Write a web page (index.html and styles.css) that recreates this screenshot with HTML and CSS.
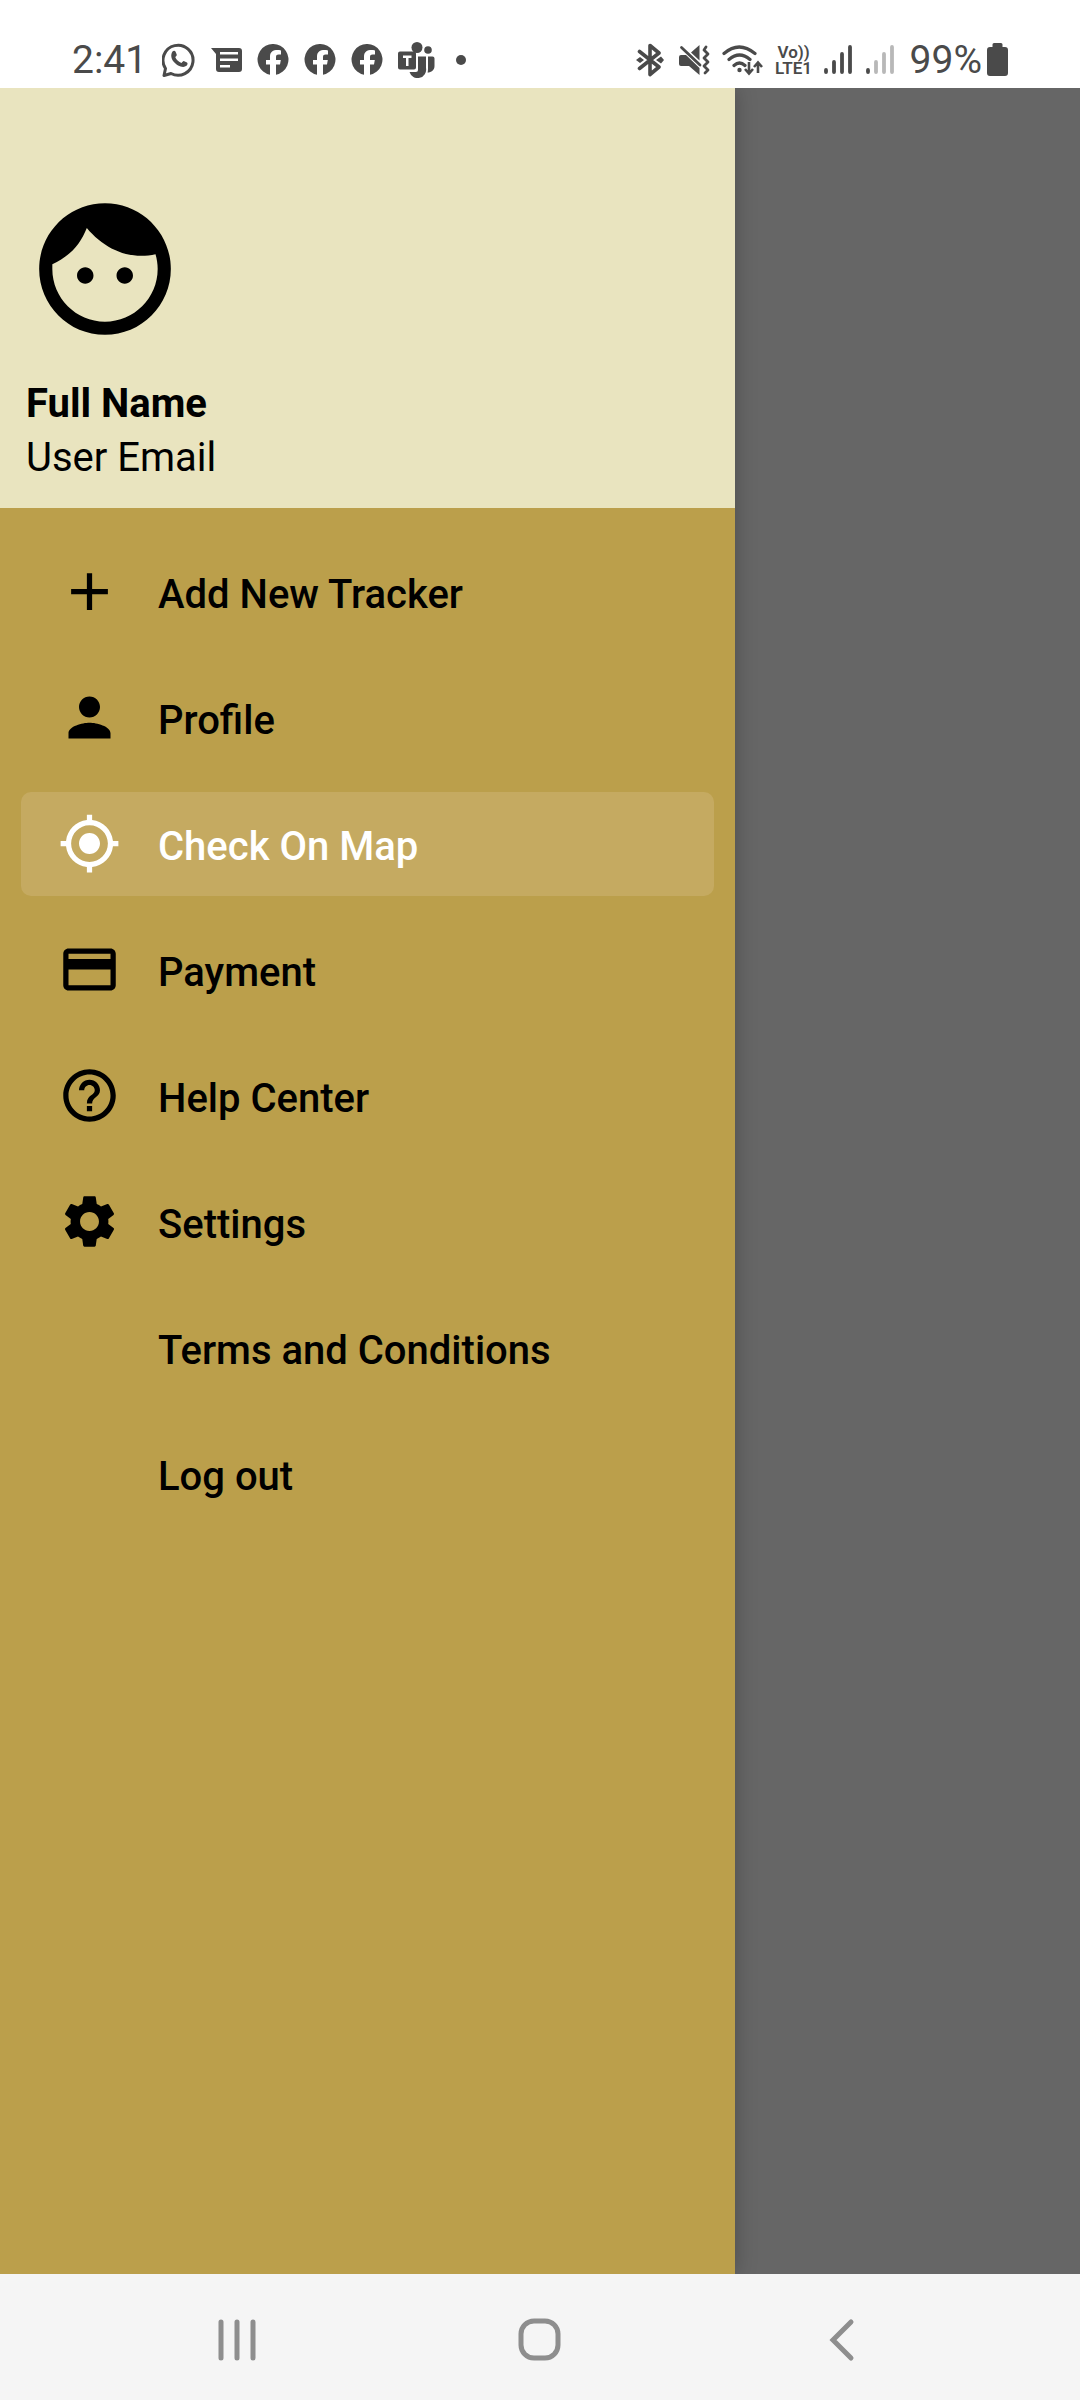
FILE: index.html
```
<!DOCTYPE html>
<html lang="en">
<head>
<meta charset="utf-8">
<meta name="viewport" content="width=device-width, initial-scale=1">
<title>Tracker menu</title>
<link rel="stylesheet" href="styles.css">
</head>
<body>
<svg class="symbols" aria-hidden="true">
  <symbol id="facebook" viewBox="0 0 32 32"><path d="M13 30.700A15.500 15.500 0 1 1 19 30.700V20.500h4l.8-4.500H19v-3c0-1.700.8-2.500 2.700-2.500H24V6.400c-6-1.200-11 .4-11 6.100V16H9v4.500h4z"/></symbol>
</svg>

<header class="status">
  <div class="status-left">
    <time class="status-text">2:41</time>
    <svg width="34" height="36" viewBox="0 0 34 36"><path d="M3.500 26.500A15 15 0 1 1 9 31.500L2 33.500z" fill="none" stroke="currentColor" stroke-width="3" stroke-linejoin="round"/><path d="M10.500 9.500c1-1 2.700-.8 3.200.4l1 2.600c.4 1-.9 1.900-1.400 2.700 1.300 2.900 3.500 4.700 6.200 5.800.9-.7 1.600-2.300 2.700-1.800l2.800 1.400c1 .6.500 2.300-.5 3.200-5.600 4.500-19.400-6-14-14.300z"/></svg>
    <svg width="31" height="26" viewBox="0 0 31 26"><path fill-rule="evenodd" d="M0 1h28a3 3 0 0 1 3 3v18a3 3 0 0 1-3 3H8a3 3 0 0 1-3-3V7zM9 5v2.500h18V5zm0 6.500V14h18v-2.500zM9 18v2.500h10V18z"/></svg>
    <svg width="32" height="32"><use href="#facebook"/></svg>
    <svg width="32" height="32"><use href="#facebook"/></svg>
    <svg width="32" height="32"><use href="#facebook"/></svg>
    <svg width="37" height="36" viewBox="0 0 37 36"><circle cx="19" cy="5.500" r="5.500"/><circle cx="30" cy="8" r="3.800"/><path d="M20 14.500h8V26a8.500 8.500 0 0 1-16.500 4H18a2 2 0 0 0 2-2zM30 14.500h4.500a2 2 0 0 1 2 2V24c0 4-3 6.500-7 6.500.4-1 .5-2.500.5-4z"/><path fill-rule="evenodd" d="M2 9.500h14a2 2 0 0 1 2 2v14a2 2 0 0 1-2 2H2a2 2 0 0 1-2-2v-14a2 2 0 0 1 2-2zM5 13.500V16h3v8h2.500v-8h3v-2.500z"/></svg>
    <svg width="24" height="12" viewBox="0 0 24 12"><circle cx="11" cy="6" r="5"/></svg>
  </div>
  <div class="status-right">
    <svg width="31" height="34" viewBox="0 0 31 34"><path d="M3.500 8.500 23 24l-9 7.500v-29L23 10 3.500 25.500" fill="none" stroke="currentColor" stroke-width="3.600" stroke-linejoin="round" stroke-linecap="round"/><path d="M0 17l4-3 4 3-4 3zM20 17l5-3.500 3 3.500-3 3.500z"/></svg>
    <svg width="31" height="32" viewBox="0 0 31 32"><path d="M20.500 1v15.500L12 8.500zM2 11h5l13.500 13V31L10 22H2a2 2 0 0 1-2-2v-7a2 2 0 0 1 2-2z"/><path d="M2.500 3.500 21 21M27 3l-2 3 4 4-4 4 4 4-4 4 4 4-3 3" fill="none" stroke="currentColor" stroke-width="2.800" stroke-linecap="round" stroke-linejoin="round"/></svg>
    <svg width="42" height="32" viewBox="0 0 42 32"><path d="M2 9.500Q17-3.500 33 9.500M7 15.500q10.500-9 21 0M12 21.500q5.500-5 11 0" fill="none" stroke="currentColor" stroke-width="3.200" stroke-linecap="round"/><circle cx="17.500" cy="26" r="2.200"/><path d="M27 18v11m-4-4 4 4.500 4-4.500M36 29V18m-4 5 4-4.500 4 4.500" fill="none" stroke="currentColor" stroke-width="2.600"/></svg>
    <span class="volte"><span>Vo))</span><span>LTE1</span></span>
    <svg width="30" height="30" viewBox="0 0 30 30"><g fill="none" stroke="currentColor" stroke-width="3.800" stroke-linecap="round"><path d="M2 25v2M10 17v10M18 9v18M26 2v25"/></g></svg>
    <svg width="32" height="30" viewBox="0 0 32 30"><g fill="none" stroke="currentColor" stroke-width="3.800" stroke-linecap="round"><path d="M2 25v2"/><path class="faded" d="M10 17v10M18 9v18M26 2v25"/></g></svg>
    <span class="battery"><span class="status-text">99%</span><svg width="26" height="34" viewBox="0 0 26 34"><path d="M12 0h7a1.500 1.500 0 0 1 1.500 1.500V4H23a3 3 0 0 1 3 3v23a3 3 0 0 1-3 3H8a3 3 0 0 1-3-3V7a3 3 0 0 1 3-3h2.500V1.500A1.500 1.500 0 0 1 12 0z"/></svg></span>
  </div>
</header>

<main class="screen">
  <aside class="drawer">
    <section class="account">
      <svg class="avatar" viewBox="0 0 24 24"><path d="M10.250 13c0 .69-.56 1.250-1.250 1.250S7.750 13.690 7.750 13s.56-1.250 1.250-1.250 1.250.56 1.250 1.250zM15 11.750c-.69 0-1.250.56-1.250 1.250s.56 1.250 1.250 1.250 1.250-.56 1.250-1.250-.56-1.250-1.250-1.250zM22 12c0 5.520-4.480 10-10 10S2 17.520 2 12 6.480 2 12 2s10 4.480 10 10zm-2 0c0-.78-.12-1.530-.33-2.240-.7.15-1.420.24-2.170.24-3.130 0-6.120-1.640-8.260-4.240C8.190 8.370 6.600 10.080 4 11.260c0 .24 0 .49 0 .74 0 4.410 3.590 8 8 8s8-3.590 8-8z"/></svg>
      <h1 class="name">Full Name</h1>
      <p class="email">User Email</p>
    </section>
    <nav class="menu">
      <a class="item" href="#add"><svg class="icon" viewBox="0 0 24 24"><path d="M19 13h-6v6h-2v-6H5v-2h6V5h2v6h6v2z"/></svg><span class="label">Add New Tracker</span></a>
      <a class="item" href="#profile"><svg class="icon" viewBox="0 0 24 24"><path d="M12 12c2.210 0 4-1.790 4-4s-1.790-4-4-4-4 1.790-4 4 1.790 4 4 4zm0 2c-2.670 0-8 1.340-8 4v2h16v-2c0-2.660-5.330-4-8-4z"/></svg><span class="label">Profile</span></a>
      <a class="item selected" href="#map" aria-current="page"><svg class="icon" viewBox="0 0 24 24"><path d="M12 8c-2.210 0-4 1.790-4 4s1.790 4 4 4 4-1.790 4-4-1.790-4-4-4zm8.940 3c-.46-4.170-3.770-7.480-7.940-7.940V1h-2v2.060C6.830 3.520 3.520 6.830 3.060 11H1v2h2.060c.46 4.170 3.770 7.480 7.940 7.940V23h2v-2.060c4.170-.46 7.480-3.770 7.940-7.940H23v-2h-2.060zM12 19c-3.870 0-7-3.130-7-7s3.130-7 7-7 7 3.130 7 7-3.130 7-7 7z"/></svg><span class="label">Check On Map</span></a>
      <a class="item" href="#payment"><svg class="icon" viewBox="0 0 24 24"><path d="M20 4H4c-1.110 0-1.990.89-1.990 2L2 18c0 1.110.89 2 2 2h16c1.110 0 2-.89 2-2V6c0-1.110-.89-2-2-2zm0 14H4v-6h16v6zm0-10H4V6h16v2z"/></svg><span class="label">Payment</span></a>
      <a class="item" href="#help"><svg class="icon" viewBox="0 0 24 24"><path d="M11 18h2v-2h-2v2zm1-16C6.480 2 2 6.480 2 12s4.480 10 10 10 10-4.480 10-10S17.520 2 12 2zm0 18c-4.410 0-8-3.590-8-8s3.590-8 8-8 8 3.590 8 8-3.590 8-8 8zm0-14c-2.210 0-4 1.790-4 4h2c0-1.100.9-2 2-2s2 .9 2 2c0 2-3 1.750-3 5h2c0-2.250 3-2.500 3-5 0-2.210-1.790-4-4-4z"/></svg><span class="label">Help Center</span></a>
      <a class="item" href="#settings"><svg class="icon" viewBox="0 0 24 24"><path d="M19.140 12.940c.04-.3.06-.61.06-.94 0-.32-.02-.64-.07-.94l2.030-1.580c.18-.14.23-.41.12-.61l-1.920-3.320c-.12-.22-.37-.29-.59-.22l-2.390.96c-.5-.38-1.030-.7-1.620-.94l-.36-2.540c-.04-.24-.24-.41-.48-.41h-3.840c-.24 0-.43.17-.47.41l-.36 2.540c-.59.24-1.130.57-1.620.94l-2.390-.96c-.22-.08-.47 0-.59.22L2.740 8.870c-.12.21-.08.47.12.61l2.030 1.580c-.05.3-.09.63-.09.94s.02.64.07.94l-2.030 1.580c-.18.14-.23.41-.12.61l1.920 3.320c.12.22.37.29.59.22l2.390-.96c.5.38 1.030.7 1.620.94l.36 2.540c.05.24.24.41.48.41h3.840c.24 0 .44-.17.47-.41l.36-2.540c.59-.24 1.130-.56 1.620-.94l2.390.96c.22.08.47 0 .59-.22l1.920-3.320c.12-.22.07-.47-.12-.61l-2.010-1.580zM12 15.600c-1.980 0-3.600-1.620-3.600-3.600s1.620-3.600 3.600-3.600 3.600 1.620 3.600 3.600-1.620 3.600-3.600 3.600z"/></svg><span class="label">Settings</span></a>
      <a class="item" href="#terms"><span class="icon"></span><span class="label">Terms and Conditions</span></a>
      <a class="item" href="#logout"><span class="icon"></span><span class="label">Log out</span></a>
    </nav>
  </aside>
</main>

<footer class="system-nav">
  <button type="button" aria-label="Recent apps"><svg width="44" height="44" viewBox="0 0 44 44"><path d="M5 4v36M21 4v36M37 4v36"/></svg></button>
  <button type="button" aria-label="Home"><svg width="44" height="44" viewBox="0 0 44 44"><rect x="3" y="3" width="37" height="37" rx="13"/></svg></button>
  <button type="button" aria-label="Back"><svg width="44" height="44" viewBox="0 0 44 44"><path d="M31 4 13 22l18 18"/></svg></button>
</footer>
</body>
</html>
```
FILE: styles.css
```
* {
  box-sizing: border-box;
}

body {
  margin: 0;
  min-height: 100vh;
  display: flex;
  flex-direction: column;
  background: #fff;
  color: #000;
  font-family: Roboto, "Liberation Sans", sans-serif;
}

svg {
  flex: none;
  fill: currentColor;
}

.symbols {
  display: none;
}

/* Status bar */
.status {
  display: flex;
  justify-content: space-between;
  align-items: center;
  height: 88px;
  padding: 32px 72px 0;
  color: #4a4a4a;
}

.status-left,
.status-right,
.battery {
  display: flex;
  align-items: center;
}

.status-left {
  gap: 15px;
}

.status-right {
  gap: 12px;
}

.status-text {
  font-size: 39px;
  line-height: 40px;
}

.volte {
  display: flex;
  flex-direction: column;
  align-items: center;
  width: 36px;
  font-size: 17px;
  font-weight: 600;
  line-height: 16px;
}

.faded {
  stroke: #b8b8b8;
}

/* Drawer over the dimmed screen */
.screen {
  flex: 1;
  display: flex;
  background: #666;
}

.drawer {
  width: min(735px, 80%);
  background: #bb9f4b;
  box-shadow: 0 0 20px rgba(0, 0, 0, 0.25);
  clip-path: inset(0 -30px 0 0);
}

.account {
  padding: 102px 26px 23px;
  background: #e9e4bf;
}

.avatar {
  display: block;
  width: 158px;
  height: 158px;
}

.name,
.email {
  margin: 0;
  font-size: 40px;
  line-height: 54px;
}

.name {
  margin-top: 29px;
  font-weight: 700;
}

.email {
  font-weight: 400;
}

.menu {
  display: flex;
  flex-direction: column;
  gap: 22px;
  padding: 32px 21px;
}

.item {
  display: flex;
  align-items: center;
  gap: 37px;
  height: 104px;
  padding: 0 37px 2px;
  border-radius: 10px;
  color: #000;
  text-decoration: none;
}

.selected {
  background: #c5aa61;
  color: #fff;
}

.icon {
  flex: none;
  width: 63px;
  height: 63px;
}

.label {
  padding-top: 8px;
  font-size: 40px;
  font-weight: 500;
  line-height: 48px;
}

/* System navigation */
.system-nav {
  display: flex;
  height: 126px;
  padding: 6px 87px 0;
  background: #f5f5f5;
}

.system-nav button {
  flex: 1;
  display: flex;
  align-items: center;
  justify-content: center;
  border: 0;
  padding: 0;
  background: none;
  color: #8e8e8e;
}

.system-nav svg {
  fill: none;
  stroke: currentColor;
  stroke-width: 5;
  stroke-linecap: round;
}
```
